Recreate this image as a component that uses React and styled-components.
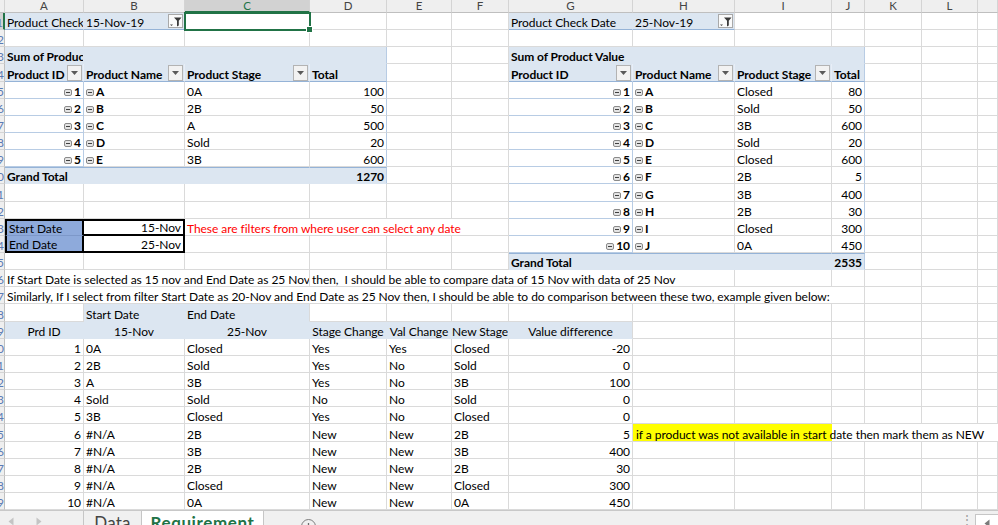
import React from 'react';
import styled, { createGlobalStyle } from 'styled-components';

const GRID = '#dadada';
const PIVOT = '#dce6f1';
const PIVOT_LINE = '#95b3d7';
const PL = '#b8cce4';
const GREEN = '#217346';
const FONT = `Lato, "Liberation Sans", sans-serif`;

const COLS = [5, 79, 101, 125, 77, 65, 57, 124, 102, 97, 33, 57, 56, 20];
const LETTERS = ['', 'A', 'B', 'C', 'D', 'E', 'F', 'G', 'H', 'I', 'J', 'K', 'L', ''];

const GlobalStyle = createGlobalStyle`
  html, body { margin: 0; padding: 0; background: #fff; overflow: hidden; }
  body { font-family: ${FONT}; }
`;

const Screen = styled.div`
  width: 998px;
  height: 525px;
  display: flex;
  flex-direction: column;
  overflow: hidden;
  background: #fff;
`;

const Sheet = styled.div`
  flex: none;
  display: grid;
  grid-template-columns: ${COLS.map((w) => `${w}px`).join(' ')};
  grid-template-rows: 13px repeat(29, 17.15px);
`;

const ColHead = styled.div`
  box-sizing: border-box;
  background: ${(p) => (p.$active ? '#d2d2d2' : '#efefef')};
  color: ${(p) => (p.$active ? GREEN : '#444')};
  border-right: 1px solid #d4d4d4;
  border-bottom: ${(p) => (p.$active ? `2px solid ${GREEN}` : '1px solid #bfbfbf')};
  font-size: 11.5px;
  line-height: 12px;
  text-align: center;
  overflow: hidden;
`;

const RowHead = styled.div`
  box-sizing: border-box;
  background: ${(p) => (p.$active ? '#d2d2d2' : '#efefef')};
  border-right: ${(p) => (p.$active ? `2px solid ${GREEN}` : '1px solid #bfbfbf')};
  border-bottom: 1px solid #d4d4d4;
  color: #5b7bb5;
  font-size: 12px;
  line-height: 13px;
  display: flex;
  justify-content: flex-end;
  align-items: flex-end;
  overflow: hidden;
`;

const Cell = styled.div`
  grid-column: span ${(p) => p.$span || 1};
  box-sizing: border-box;
  min-width: 0;
  display: flex;
  align-items: flex-end;
  justify-content: ${(p) =>
    p.$align === 'right' ? 'flex-end' : p.$align === 'center' ? 'center' : 'flex-start'};
  padding: 0 2px;
  font-size: 12px;
  line-height: 13px;
  letter-spacing: -0.05px;
  color: ${(p) => p.$color || '#000'};
  font-weight: ${(p) => (p.$bold ? 700 : 400)};
  background: ${(p) => p.$fill || '#fff'};
  border-right: 1px solid ${(p) => p.$lineR || GRID};
  border-bottom: 1px solid ${(p) => p.$lineB || GRID};
  border-top: ${(p) => (p.$lineT ? `1px solid ${p.$lineT}` : 'none')};
  white-space: pre;
  overflow-x: clip;
  overflow-y: visible;
`;

const SelectedCell = styled.div`
  position: relative;
  z-index: 2;
  margin: -1px;
  box-sizing: border-box;
  border: 2px solid ${GREEN};
  background: #fff;
  &::after {
    content: '';
    position: absolute;
    right: -4px;
    bottom: -4px;
    width: 5px;
    height: 5px;
    background: ${GREEN};
    border: 1px solid #fff;
  }
`;

const DateKey = styled(Cell)`
  background: #8eaadb;
  border-left: 2px solid #000;
  border-right: 2px solid #000;
  border-top: ${(p) => (p.$top ? '2px solid #000' : 'none')};
  border-bottom: ${(p) => (p.$top ? '1px solid #7d98c9' : '2px solid #000')};
`;

const DateValue = styled(Cell)`
  justify-content: flex-end;
  border-right: 2px solid #000;
  border-top: ${(p) => (p.$top ? '2px solid #000' : 'none')};
  border-bottom: 2px solid #000;
`;

const Note = styled(Cell)`
  color: #ff0000;
`;

const Highlight = styled(Cell)`
  background: linear-gradient(to right, #ffff00 0 199px, #fff 199px);
  padding-left: 3px;
  border-right: none;
`;

const Collapse = styled.span`
  display: inline-block;
  flex: none;
  width: 8px;
  height: 7px;
  box-sizing: border-box;
  border: 1px solid #8a8a8a;
  border-radius: 2px;
  margin: 0 2px 2px 0;
  background: linear-gradient(#404040, #404040) center / 4px 1px no-repeat, #e4e4e4;
`;

const DropButton = styled.span`
  flex: none;
  margin-left: auto;
  margin-right: -1px;
  width: 15px;
  height: 16px;
  box-sizing: border-box;
  border: 1px solid #b3b3b3;
  background: #f2f2f2;
  display: flex;
  align-items: center;
  justify-content: center;
`;

const FilterButton = styled.span`
  flex: none;
  margin-left: auto;
  margin-right: -1px;
  margin-bottom: 1px;
  width: 15px;
  height: 14px;
  box-sizing: border-box;
  border: 1px solid #a9a9a9;
  background: #fafafa;
  display: flex;
  align-items: center;
  justify-content: center;
`;

const TabBar = styled.div`
  flex: 1;
  display: flex;
  align-items: stretch;
  background: #f0f0f0;
  border-top: 1px solid #c8c8c8;
  box-sizing: border-box;
  overflow: hidden;
`;

const NavArrows = styled.div`
  width: 84px;
  display: flex;
  align-items: flex-start;
  gap: 22px;
  padding: 6px 0 0 8px;
  box-sizing: border-box;
  border-right: 1px solid #c6c6c6;
`;

const Tab = styled.div`
  width: ${(p) => p.$w}px;
  box-sizing: border-box;
  border-right: 1px solid #c6c6c6;
  background: ${(p) => (p.$active ? '#fff' : 'transparent')};
  margin-top: ${(p) => (p.$active ? '-1px' : '0')};
  color: ${(p) => (p.$active ? GREEN : '#444')};
  font-weight: ${(p) => (p.$active ? 700 : 400)};
  font-size: 17px;
  letter-spacing: ${(p) => (p.$active ? '0.6px' : '0.2px')};
  line-height: 18px;
  text-align: center;
  padding-top: ${(p) => (p.$active ? '4px' : '3px')};
  white-space: nowrap;
`;

const AddButton = styled.div`
  margin-left: 37px;
  margin-top: 8px;
  width: 15px;
  height: 15px;
  flex: none;
  box-sizing: border-box;
  border: 1px solid #7d7d7d;
  border-radius: 50%;
  display: flex;
  align-items: center;
  justify-content: center;
`;

const Dots = styled.div`
  margin-left: auto;
  width: 17px;
  color: #9a9a9a;
  font-size: 12px;
  line-height: 12px;
  padding-top: 3px;
  text-align: center;
`;

const ScrollBox = styled.div`
  width: 23px;
  box-sizing: border-box;
  border-left: 1px solid #c6c6c6;
  border-top: 1px solid #c6c6c6;
  margin-top: 3px;
  background: #fff;
  display: flex;
  justify-content: center;
  padding-top: 4px;
`;

const Tri = ({ dir, color = '#c4c4c4' }) => (
  <svg width="6" height="9" viewBox="0 0 6 9">
    <path d={dir === 'left' ? 'M5.5 0.5 L0.5 4.5 L5.5 8.5 Z' : 'M0.5 0.5 L5.5 4.5 L0.5 8.5 Z'} fill={color} />
  </svg>
);

const DownArrow = () => (
  <svg width="7" height="4" viewBox="0 0 7 4">
    <path d="M0 0 H7 L3.5 4 Z" fill="#5a5a5a" />
  </svg>
);

const FunnelIcon = () => (
  <svg width="13" height="11" viewBox="0 0 13 11">
    <path d="M1 8.5 H4 L2.5 10 Z" fill="#444" />
    <path d="M5 1.5 H12.5 L9.8 4.8 V9.5 L8 10.5 V4.8 Z" fill="#3a3a3a" />
  </svg>
);

const PlusIcon = () => (
  <svg width="9" height="9" viewBox="0 0 9 9">
    <path d="M4.5 1 V8 M1 4.5 H8" stroke="#6d6d6d" strokeWidth="1.3" />
  </svg>
);

const blanks = (n) => Array.from({ length: n }, () => ({}));

const pivotRow = ([id, name, stage, total]) => [
  { t: String(id), bold: true, align: 'right', lineB: PL, lineR: PL, collapse: true },
  { t: name, bold: true, collapse: true },
  { t: stage },
  { t: String(total), align: 'right', lineR: PL },
];

const grandRow = (total) => [
  { t: 'Grand Total', span: 3, bold: true, fill: PIVOT, lineB: PIVOT, lineR: PIVOT, lineT: PIVOT_LINE },
  { t: String(total), bold: true, align: 'right', fill: PIVOT, lineB: PIVOT, lineR: PL, lineT: PIVOT_LINE },
];

const headRow = () => [
  { t: 'Product ID', bold: true, fill: PIVOT, lineB: PIVOT_LINE, lineR: '#e8eef7', drop: true },
  { t: 'Product Name', bold: true, fill: PIVOT, lineB: PIVOT_LINE, lineR: '#e8eef7', drop: true },
  { t: 'Product Stage', bold: true, fill: PIVOT, lineB: PIVOT_LINE, lineR: '#e8eef7', drop: true },
  { t: 'Total', bold: true, fill: PIVOT, lineB: PIVOT_LINE, lineR: PL },
];

const titleRow = (text) => [
  { t: text, bold: true, fill: PIVOT, lineB: PIVOT, lineR: PIVOT },
  { fill: PIVOT, lineB: PIVOT, lineR: PIVOT },
  { fill: PIVOT, lineB: PIVOT, lineR: PIVOT },
  { fill: PIVOT, lineB: PIVOT, lineR: PL },
];

const leftItems = [
  [1, 'A', '0A', 100],
  [2, 'B', '2B', 50],
  [3, 'C', 'A', 500],
  [4, 'D', 'Sold', 20],
  [5, 'E', '3B', 600],
];

const rightItems = [
  [1, 'A', 'Closed', 80],
  [2, 'B', 'Sold', 50],
  [3, 'C', '3B', 600],
  [4, 'D', 'Sold', 20],
  [5, 'E', 'Closed', 600],
  [6, 'F', '2B', 5],
  [7, 'G', '3B', 400],
  [8, 'H', '2B', 30],
  [9, 'I', 'Closed', 300],
  [10, 'J', '0A', 450],
];

const compareRows = [
  [1, '0A', 'Closed', 'Yes', 'Yes', 'Closed', '-20'],
  [2, '2B', 'Sold', 'Yes', 'No', 'Sold', '0'],
  [3, 'A', '3B', 'Yes', 'No', '3B', '100'],
  [4, 'Sold', 'Sold', 'No', 'No', 'Sold', '0'],
  [5, '3B', 'Closed', 'Yes', 'No', 'Closed', '0'],
  [6, '#N/A', '2B', 'New', 'New', '2B', '5'],
  [7, '#N/A', '3B', 'New', 'New', '3B', '400'],
  [8, '#N/A', '2B', 'New', 'New', '2B', '30'],
  [9, '#N/A', 'Closed', 'New', 'New', 'Closed', '300'],
  [10, '#N/A', '0A', 'New', 'New', '0A', '450'],
];

const compareHead = ['Prd ID', '15-Nov', '25-Nov', 'Stage Change', 'Val Change', 'New Stage', 'Value difference'];

const rows = [];
// 1
rows.push([
  { t: 'Product Check', fill: PIVOT, lineB: PIVOT_LINE, lineR: PIVOT },
  { t: '15-Nov-19', fill: PIVOT, lineB: PIVOT_LINE, filter: true },
  { kind: 'select' },
  ...blanks(3),
  { t: 'Product Check Date', fill: PIVOT, lineB: PIVOT_LINE, lineR: PIVOT },
  { t: '25-Nov-19', fill: PIVOT, lineB: PIVOT_LINE, filter: true },
  ...blanks(5),
]);
// 2
rows.push(blanks(13));
// 3
rows.push([...titleRow('Sum of Produc'), ...blanks(2), ...titleRow('Sum of Product Value'), ...blanks(3)]);
// 4
rows.push([...headRow(), ...blanks(2), ...headRow(), ...blanks(3)]);
// 5-9
for (let i = 0; i < 5; i++) {
  rows.push([...pivotRow(leftItems[i]), ...blanks(2), ...pivotRow(rightItems[i]), ...blanks(3)]);
}
// 10
rows.push([...grandRow(1270), ...blanks(2), ...pivotRow(rightItems[5]), ...blanks(3)]);
// 11-12
rows.push([...blanks(6), ...pivotRow(rightItems[6]), ...blanks(3)]);
rows.push([...blanks(6), ...pivotRow(rightItems[7]), ...blanks(3)]);
// 13
rows.push([
  { kind: 'dateKey', t: 'Start Date', top: true },
  { kind: 'dateValue', t: '15-Nov', top: true },
  { kind: 'note', t: 'These are filters from where user can select any date', span: 4 },
  ...pivotRow(rightItems[8]),
  ...blanks(3),
]);
// 14
rows.push([
  { kind: 'dateKey', t: 'End Date' },
  { kind: 'dateValue', t: '25-Nov' },
  ...blanks(4),
  ...pivotRow(rightItems[9]),
  ...blanks(3),
]);
// 15
rows.push([...blanks(6), ...grandRow(2535), ...blanks(3)]);
// 16
rows.push([
  { t: 'If Start Date is selected as 15 nov and End Date as 25 Nov', span: 3 },
  { t: 'then,  I should be able to compare data of 15 Nov with data of 25 Nov', span: 5 },
  ...blanks(5),
]);
// 17
rows.push([
  {
    t: 'Similarly, If I select from filter Start Date as 20-Nov and End Date as 25 Nov then, I should be able to do comparison between these two, example given below:',
    span: 10,
  },
  ...blanks(3),
]);
// 18
rows.push([
  {},
  { t: 'Start Date', fill: PIVOT, lineB: PIVOT, lineR: PIVOT },
  { t: 'End Date', fill: PIVOT, lineB: PIVOT },
  ...blanks(10),
]);
// 19
rows.push([
  ...compareHead.map((t, i) => ({
    t,
    align: 'center',
    fill: PIVOT,
    lineB: PIVOT,
    lineR: i === compareHead.length - 1 ? GRID : PIVOT,
  })),
  ...blanks(6),
]);
// 20-29
compareRows.forEach((r) => {
  const [id, a, b, c, d, e, diff] = r;
  const tail =
    id === 6
      ? [{ kind: 'mark', t: 'if a product was not available in start date then mark them as NEW', span: 6 }]
      : blanks(6);
  rows.push([
    { t: String(id), align: 'right' },
    { t: a },
    { t: b },
    { t: c },
    { t: d },
    { t: e },
    { t: diff, align: 'right' },
    ...tail,
  ]);
});

const renderCell = (c, key) => {
  const common = {
    key,
    $span: c.span,
    $align: c.align,
    $bold: c.bold,
    $fill: c.fill,
    $lineR: c.lineR,
    $lineB: c.lineB,
    $lineT: c.lineT,
  };
  if (c.kind === 'select') return <SelectedCell key={key} />;
  if (c.kind === 'dateKey')
    return (
      <DateKey key={key} $top={c.top}>
        {c.t}
      </DateKey>
    );
  if (c.kind === 'dateValue')
    return (
      <DateValue key={key} $top={c.top}>
        {c.t}
      </DateValue>
    );
  if (c.kind === 'note')
    return (
      <Note key={key} $span={c.span}>
        {c.t}
      </Note>
    );
  if (c.kind === 'mark')
    return (
      <Highlight key={key} $span={c.span}>
        {c.t}
      </Highlight>
    );
  return (
    <Cell {...common}>
      {c.collapse && <Collapse />}
      {c.t}
      {c.drop && (
        <DropButton>
          <DownArrow />
        </DropButton>
      )}
      {c.filter && (
        <FilterButton>
          <FunnelIcon />
        </FilterButton>
      )}
    </Cell>
  );
};

export default function App() {
  return (
    <>
      <GlobalStyle />
      <Screen>
        <Sheet>
          {LETTERS.map((l, i) => (
            <ColHead key={`h${i}`} $active={l === 'C'}>
              {l}
            </ColHead>
          ))}
          {rows.map((row, ri) => (
            <React.Fragment key={`r${ri}`}>
              <RowHead $active={ri === 0}>{ri + 1}</RowHead>
              {row.map((c, ci) => renderCell(c, `c${ri}-${ci}`))}
            </React.Fragment>
          ))}
        </Sheet>
        <TabBar>
          <NavArrows>
            <Tri dir="left" />
            <Tri dir="right" />
          </NavArrows>
          <Tab $w={58}>Data</Tab>
          <Tab $w={122} $active>
            Requirement
          </Tab>
          <AddButton>
            <PlusIcon />
          </AddButton>
          <Dots>⋮</Dots>
          <ScrollBox>
            <Tri dir="left" color="#7a7a7a" />
          </ScrollBox>
        </TabBar>
      </Screen>
    </>
  );
}
